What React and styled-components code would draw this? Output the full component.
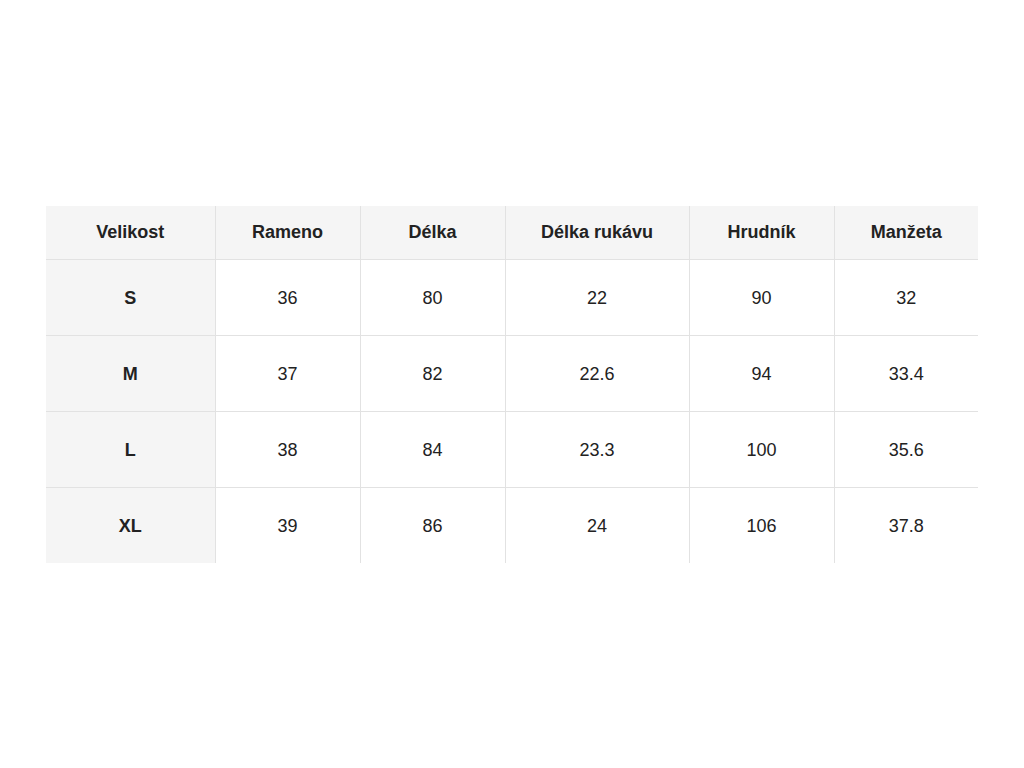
import React from 'react';
import styled, { createGlobalStyle } from 'styled-components';

const GlobalStyle = createGlobalStyle`
    body {
        margin: 0;
        background: #fff;
        font-family: "Liberation Sans", Arial, sans-serif;
        color: #222;
    }
`

const columns = [
    { title: 'Velikost', width: 169 },
    { title: 'Rameno', width: 145 },
    { title: 'Délka', width: 145 },
    { title: 'Délka rukávu', width: 184 },
    { title: 'Hrudník', width: 145 },
    { title: 'Manžeta', width: 144 },
];

const rows = [
    ['S', '36', '80', '22', '90', '32'],
    ['M', '37', '82', '22.6', '94', '33.4'],
    ['L', '38', '84', '23.3', '100', '35.6'],
    ['XL', '39', '86', '24', '106', '37.8'],
];

const SizeChart = () => {
    return (
        <Page>
            <GlobalStyle />
            <Table>
                <colgroup>
                    {columns.map(c => <col key={c.title} style={{ width: c.width }} />)}
                </colgroup>
                <thead>
                    <tr>
                        {columns.map(c => <Head key={c.title}>{c.title}</Head>)}
                    </tr>
                </thead>
                <tbody>
                    {rows.map(r => (
                        <Row key={r[0]}>
                            {r.map((v, i) => (
                                <Cell key={i} $label={i === 0}>{v}</Cell>
                            ))}
                        </Row>
                    ))}
                </tbody>
            </Table>
        </Page>
    );
};

export default SizeChart;

const Page = styled.div`
    padding: 206px 46px 0 46px;
`

const Table = styled.table`
    width: 932px;
    table-layout: fixed;
    border-collapse: collapse;
    border-spacing: 0;
    font-size: 18px;
    line-height: 1.2;
`

const Head = styled.th`
    height: 53px;
    padding: 1px 0 0 0;
    box-sizing: border-box;
    background: #f5f5f5;
    font-weight: bold;
    text-align: center;
    vertical-align: middle;
    color: #222;
    border-bottom: 1px solid #e2e2e2;
    border-right: 1px solid #e2e2e2;

    &:last-child {
        border-right: none;
    }
`

const Row = styled.tr`
    border-bottom: 1px solid #e2e2e2;

    &:last-child {
        border-bottom: none;
    }
`

const Cell = styled.td`
    height: 76px;
    padding: 4px 0 0 0;
    box-sizing: border-box;
    text-align: center;
    vertical-align: middle;
    background: ${({ $label }) => ($label ? '#f5f5f5' : '#fff')};
    font-weight: ${({ $label }) => ($label ? 'bold' : 'normal')};
    border-right: 1px solid #e2e2e2;

    &:last-child {
        border-right: none;
    }
`
